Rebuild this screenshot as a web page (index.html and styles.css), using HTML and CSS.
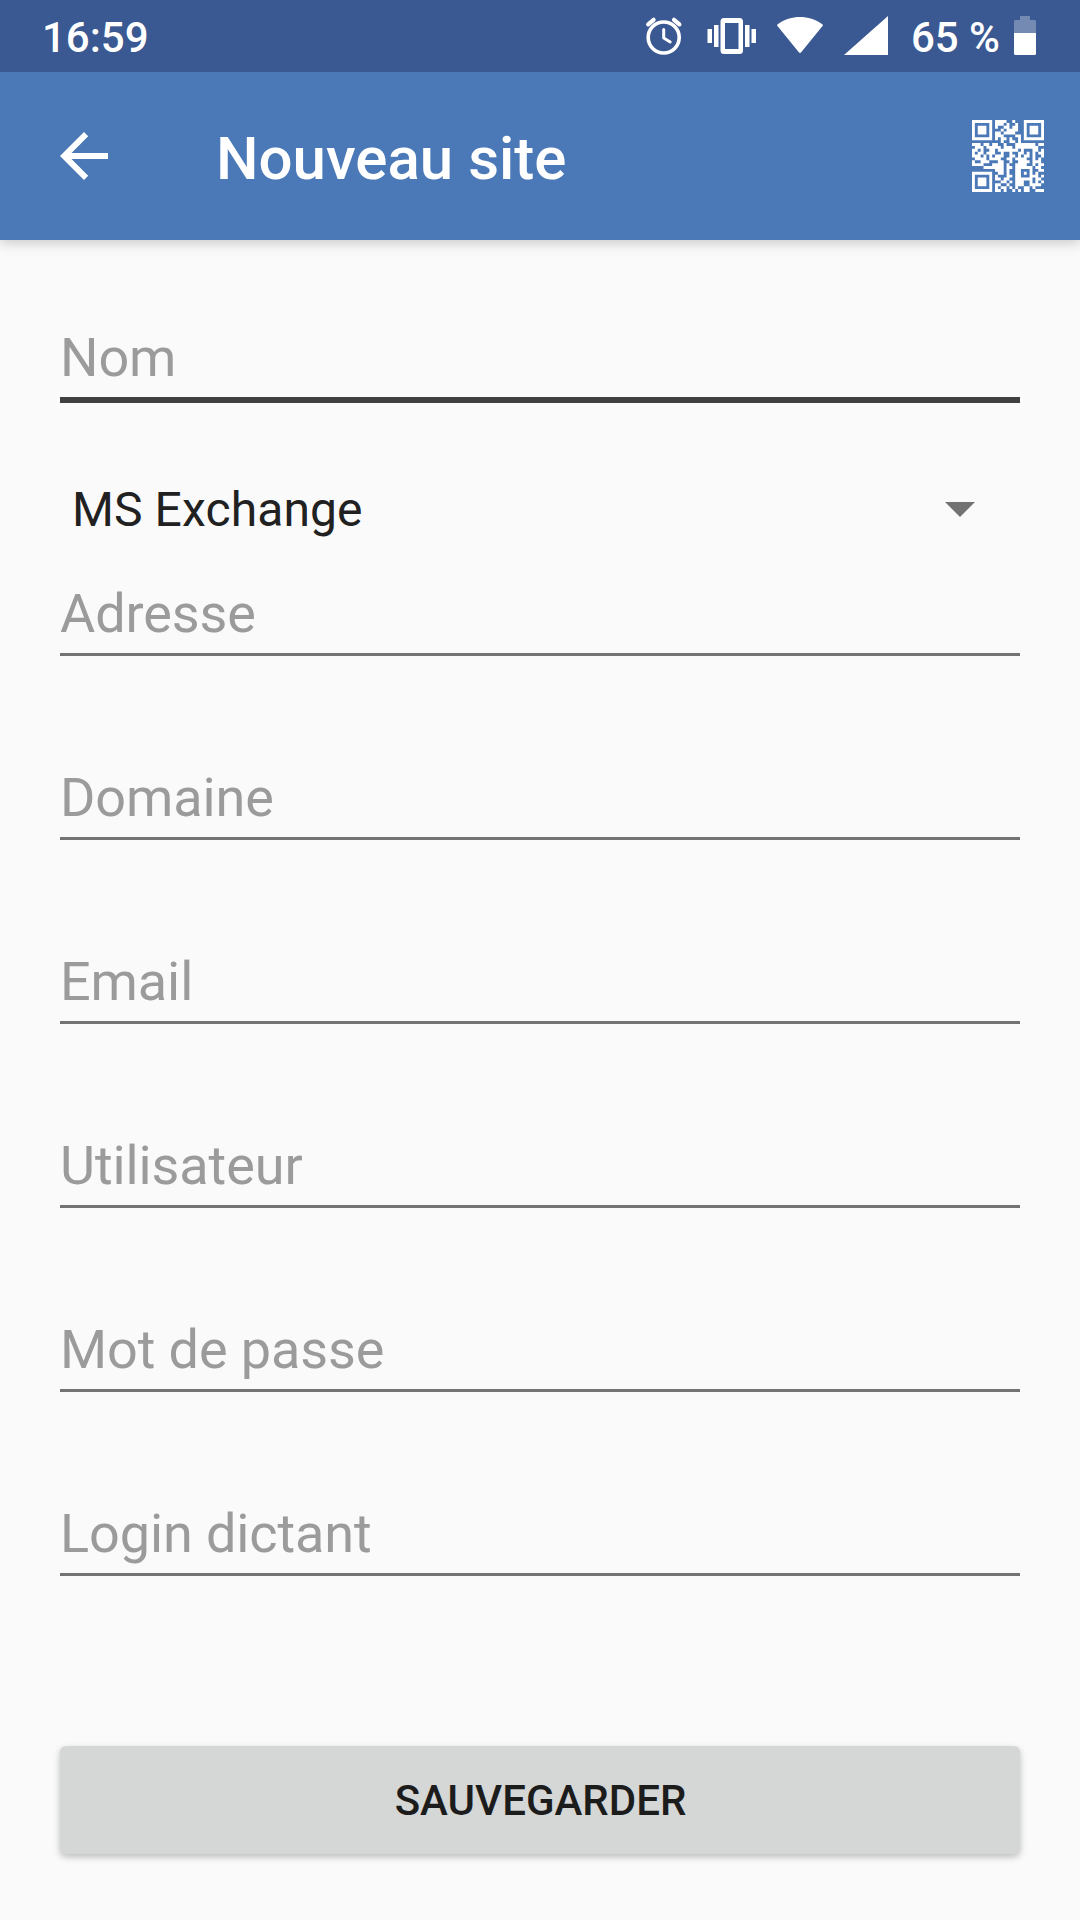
FILE: index.html
```html
<!DOCTYPE html>
<html lang="fr">

<head>
    <meta charset="UTF-8">
    <meta name="viewport" content="width=device-width, initial-scale=1.0">
    <title>Nouveau site</title>
    <link rel="stylesheet" href="styles.css">
</head>

<body>

    <div class="status-bar">
        <span class="status-text">16:59</span>
        <div class="status-icons">
            <svg class="icon-alarm" viewBox="0 0 38 40" fill="none" stroke="#fff" stroke-linecap="round">
                <circle cx="18.7" cy="21.5" r="15.5" stroke-width="3.6" />
                <path d="M18.7 13.500v8.500l6.500 4" stroke-width="3" stroke-linejoin="round" />
                <path d="M3.200 8.300L8.600 3.800M34.400 8.300L29 3.800" stroke-width="4.200" />
            </svg>
            <svg class="icon-vibrate" viewBox="0 0 50 36" fill="#fff">
                <rect x="0.5" y="11" width="4.5" height="14" />
                <rect x="7" y="7" width="4.5" height="22" />
                <rect x="38" y="7" width="4.5" height="22" />
                <rect x="44.5" y="11" width="4.5" height="14" />
                <path fill-rule="evenodd" d="M17 0h15.500a3.500 3.500 0 0 1 3.500 3.500v29a3.500 3.500 0 0 1-3.500 3.500H17a3.500 3.500 0 0 1-3.500-3.500v-29A3.500 3.500 0 0 1 17 0zM18 5v26h13.500V5z" />
            </svg>
            <svg class="icon-wifi" viewBox="0 0 46 36" fill="#fff">
                <path d="M0.700 7.200C14-2.400 32-2.400 45.300 7.200q1 .8.200 1.900L24.200 35.300q-1.200 1.300-2.400 0L.5 9.100q-.8-1.100.2-1.900z" />
            </svg>
            <svg class="icon-signal" viewBox="0 0 44 39" fill="#fff">
                <path d="M44 0v39H0z" />
            </svg>
            <span class="status-text">65 %</span>
            <svg class="icon-battery" viewBox="0 0 22 39" fill="#fff">
                <path opacity=".3" d="M6 0h10v4h4.500A1.500 1.500 0 0 1 22 5.500V17H0V5.500A1.500 1.500 0 0 1 1.500 4H6z" />
                <path d="M0 17h22v20.500a1.500 1.500 0 0 1-1.500 1.500h-19A1.500 1.500 0 0 1 0 37.500z" />
            </svg>
        </div>
    </div>

    <header>
        <svg class="icon-back" viewBox="0 0 48 48" fill="#fff">
            <path d="M48 21H11.500L28.200 4.200 24 0 0 24l24 24 4.200-4.200L11.500 27H48z" />
        </svg>
        <h1>Nouveau site</h1>
        <svg class="icon-qr" id="qr" viewBox="0 0 25 25" fill="#fff"></svg>
    </header>

    <main>
        <input type="text" class="field focused" placeholder="Nom">
        <div class="spinner">
            <span>MS Exchange</span>
            <svg class="icon-arrow" viewBox="0 0 30 15" fill="#737373">
                <path d="M0 0h30L15 15z" />
            </svg>
        </div>
        <input type="text" class="field" placeholder="Adresse">
        <input type="text" class="field" placeholder="Domaine">
        <input type="text" class="field" placeholder="Email">
        <input type="text" class="field" placeholder="Utilisateur">
        <input type="text" class="field" placeholder="Mot de passe">
        <input type="text" class="field" placeholder="Login dictant">
        <button class="save-btn">SAUVEGARDER</button>
    </main>

    <script src="script.js"></script>
</body>

</html>
```
FILE: styles.css
```css
body {
    font-family: Roboto, "Liberation Sans", sans-serif;
    margin: 0;
    padding: 0;
    background-color: #fafafa;
}

.status-bar {
    position: relative;
    z-index: 1;
    display: flex;
    justify-content: space-between;
    box-sizing: border-box;
    height: 72px;
    padding: 0 44px 0 42px;
    background-color: #3a5891;
    color: #fff;
}

.status-text {
    font-size: 42px;
    font-weight: 500;
    line-height: 76px;
}

.status-icons {
    display: flex;
    align-items: flex-start;
}

.status-icons svg {
    flex: none;
}

.icon-alarm {
    width: 38px;
    height: 40px;
    margin: 16px 24px 0 0;
}

.icon-vibrate {
    width: 50px;
    height: 36px;
    margin: 18px 20px 0 0;
}

.icon-wifi {
    width: 46px;
    height: 36px;
    margin: 17px 21px 0 0;
}

.icon-signal {
    width: 44px;
    height: 39px;
    margin: 16px 23px 0 0;
}

.icon-battery {
    width: 22px;
    height: 39px;
    margin: 16px 0 0 14px;
}

header {
    display: flex;
    align-items: center;
    box-sizing: border-box;
    height: 168px;
    padding: 0 36px 0 60px;
    background-color: #4b79b7;
    color: #fff;
    box-shadow: 0 3px 12px rgba(0, 0, 0, 0.2);
}

.icon-back {
    width: 48px;
    height: 48px;
}

header h1 {
    margin: 6px auto 0 108px;
    font-size: 60px;
    font-weight: 500;
    line-height: 70px;
}

.icon-qr {
    width: 72px;
    height: 72px;
}

main {
    display: flex;
    flex-direction: column;
    padding: 73px 60px 66px;
}

.field {
    box-sizing: border-box;
    width: 100%;
    height: 87px;
    margin: 0 0 97px;
    padding: 4px 0 0;
    border: none;
    border-bottom: 3px solid #737373;
    border-radius: 0;
    outline: none;
    background: none;
    color: #212121;
    font-family: inherit;
    font-size: 54px;
    letter-spacing: -0.1px;
}

.field::placeholder {
    color: #9b9b9b;
    opacity: 1;
}

.field.focused {
    height: 90px;
    margin-bottom: 62px;
    border-bottom: 6px solid #404040;
}

.spinner {
    display: flex;
    align-items: center;
    justify-content: space-between;
    height: 88px;
    margin-bottom: 16px;
    padding: 0 45px 0 12px;
    color: #212121;
    font-size: 48px;
    letter-spacing: 0.1px;
}

.icon-arrow {
    width: 30px;
    height: 15px;
}

.save-btn {
    height: 108px;
    margin-top: 73px;
    padding: 1px 0 0 1px;
    border: none;
    border-radius: 6px;
    background-color: #d5d7d6;
    color: #1c1c1c;
    font-family: inherit;
    font-size: 42px;
    font-weight: 500;
    box-shadow: 0 3px 7px rgba(0, 0, 0, 0.25);
}
```
FILE: script.js
```js
// modules of the QR icon, one string per row
const rows = [
    '#######.####..#...#######',
    '#.....#.###.#..#..#.....#',
    '#.###.#.#..##.##..#.###.#',
    '#.###.#...#.####..#.###.#',
    '#.###.#.##.####...#.###.#',
    '#.....#.###....##.#.....#',
    '#######.#.##.#..#.#######',
    '..........#..##.#........',
    '###.##.##..#...#######.##',
    '.###.#####.###.########..',
    '##.#..##.#######.#...##.#',
    '#.##.###..#..#..##.#.#.##',
    '###.#.#.###..##.#.##.#..#',
    '.####.####..##.####..#.#.',
    '#..###...##..#..####.###.',
    '####...####.#..####..#.##',
    '....#######.##.######.##.',
    '........###.#..##...#..##',
    '#######..##.#..##.#.#.#..',
    '#.....#.#...##.##...###.#',
    '#.###.#.##.##..######.##.',
    '#.###.#...##.#.###..#.#.#',
    '#.###.#.##..#..###..####.',
    '#.....#.#.##.#.#..##.#...',
    '#######.##.#..#.#.##..###'
];

let d = '';
rows.forEach((row, y) => {
    row.split('').forEach((cell, x) => {
        if (cell === '#') d += `M${x} ${y}h1v1h-1z`;
    });
});

const path = document.createElementNS('http://www.w3.org/2000/svg', 'path');
path.setAttribute('d', d);
document.getElementById('qr').appendChild(path);
```
